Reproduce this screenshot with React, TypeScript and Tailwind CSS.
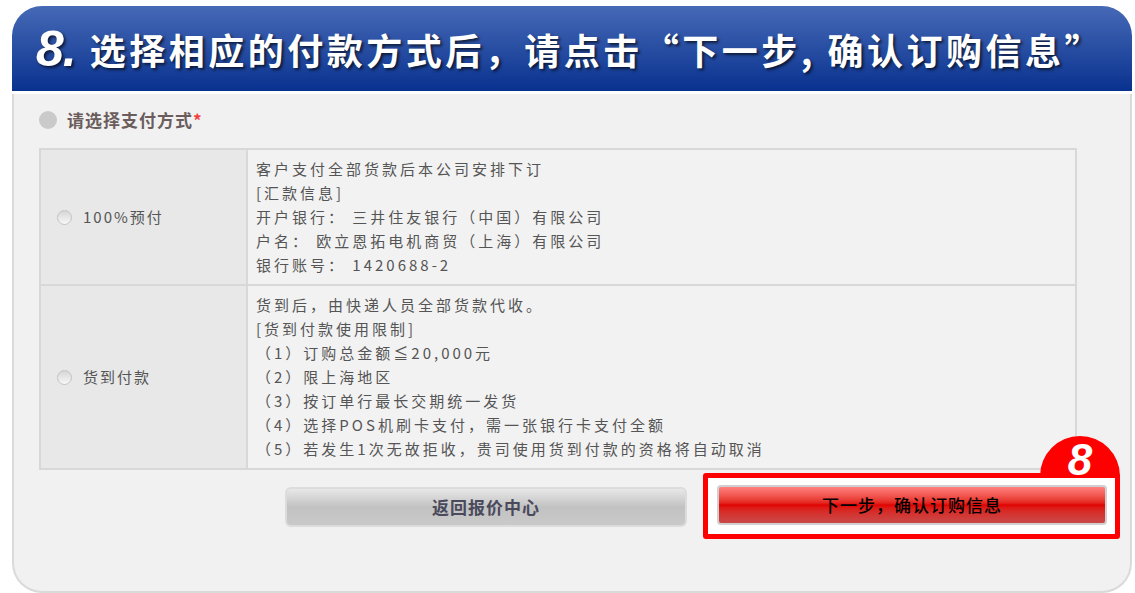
const rowOne = [
  '客户支付全部货款后本公司安排下订',
  '[汇款信息]',
  '开户银行： 三井住友银行（中国）有限公司',
  '户名： 欧立恩拓电机商贸（上海）有限公司',
  '银行账号： 1420688-2',
];

const rowTwo = [
  '货到后，由快递人员全部货款代收。',
  '[货到付款使用限制]',
  '（1）订购总金额≦20,000元',
  '（2）限上海地区',
  '（3）按订单行最长交期统一发货',
  '（4）选择POS机刷卡支付，需一张银行卡支付全额',
  '（5）若发生1次无故拒收，贵司使用货到付款的资格将自动取消',
];

const cjk = "font-['Noto_Sans_CJK_SC',sans-serif]";

function Radio() {
  return (
    <span className="w-[15px] h-[15px] rounded-full border border-[#c4c4c4] bg-gradient-to-b from-[#d6d6d6] to-[#f8f8f8] shrink-0" />
  );
}

function PayRow({ label, lines, last }: { label: string; lines: string[]; last?: boolean }) {
  return (
    <div className={`flex ${last ? '' : 'border-b-2 border-[#d8d8d8]'}`}>
      <div className="w-[207px] shrink-0 bg-[#e8e8e8] border-r-2 border-[#d8d8d8] flex items-center pl-4 gap-[11px]">
        <Radio />
        <span className="text-[15px] tracking-[2px] text-[#555]">{label}</span>
      </div>
      <div className="flex-1 bg-[#f2f2f2] pl-[8px] py-[7px]">
        {lines.map((l, i) => (
          <div key={i} className="text-[15px] leading-[24px] tracking-[3px] text-[#555] whitespace-nowrap">
            {l}
          </div>
        ))}
      </div>
    </div>
  );
}

export default function App() {
  return (
    <div className={`w-[1135px] h-[593px] bg-white pt-[6px] pl-[12px] overflow-hidden ${cjk}`}>
      <div className="w-[1120px]">
        {/* title bar */}
        <div className="h-[85px] rounded-t-[30px] bg-gradient-to-b from-[#4669b6] to-[#08318f] flex items-center pl-[24px] text-white [text-shadow:2px_2px_3px_rgba(0,0,0,0.65)]">
          <span className="font-['Liberation_Sans',sans-serif] italic font-bold text-[50px] leading-none mr-[14px] tracking-[-1px]">
            8.
          </span>
          <span className="font-bold text-[36px] tracking-[3.5px] whitespace-nowrap">
            选择相应的付款方式后，请点击“下一步, 确认订购信息”
          </span>
        </div>

        <div className="h-[3px] bg-white" />

        {/* panel */}
        <div className="h-[499px] bg-[#f1f1f1] border-x-2 border-b-2 border-[#dadada] rounded-b-[30px] pl-[25px] pt-[15px]">
          <div className="flex items-center gap-[10px] h-[22px]">
            <span className="w-[18px] h-[18px] rounded-full bg-[#cacaca]" />
            <span className="text-[17px] font-bold tracking-[1px] text-[#6a5d5c]">
              请选择支付方式<span className="text-[#f04040]">*</span>
            </span>
          </div>

          <div className="mt-[17px] w-[1038px] border-2 border-[#d8d8d8]">
            <PayRow label="100%预付" lines={rowOne} />
            <PayRow label="货到付款" lines={rowTwo} last />
          </div>

          <div className="flex items-start mt-[3px]">
            <button className="ml-[246px] mt-[14px] w-[402px] h-[40px] rounded-[6px] border-2 border-[#dcdcdc] bg-gradient-to-b from-[#e8e8e8] via-[#c2c2c2] to-[#c9c9c9] text-[17px] font-bold tracking-[1px] text-[#4a4a5c]">
              返回报价中心
            </button>

            <div className="relative ml-[16px] w-[417px] h-[66px] border-[5px] border-[#ff0000] rounded-[3px] bg-white pl-[9px] pr-[8px] pt-[7px]">
              <div className="absolute right-[-5px] top-[-42px] w-[80px] h-[40px] rounded-t-full bg-[#ff0000] flex items-start justify-center pt-[2px]">
                <span className="font-['Liberation_Sans',sans-serif] italic font-bold text-[44px] leading-none text-white">
                  8
                </span>
              </div>
              <button className="w-full h-[40px] rounded-[4px] border-2 border-[#d0d0d0] bg-gradient-to-b from-[#ff8080] via-[#e00000] to-[#c84848] text-[17px] tracking-[1px] font-medium text-black">
                下一步，确认订购信息
              </button>
            </div>
          </div>
        </div>
      </div>
    </div>
  );
}
